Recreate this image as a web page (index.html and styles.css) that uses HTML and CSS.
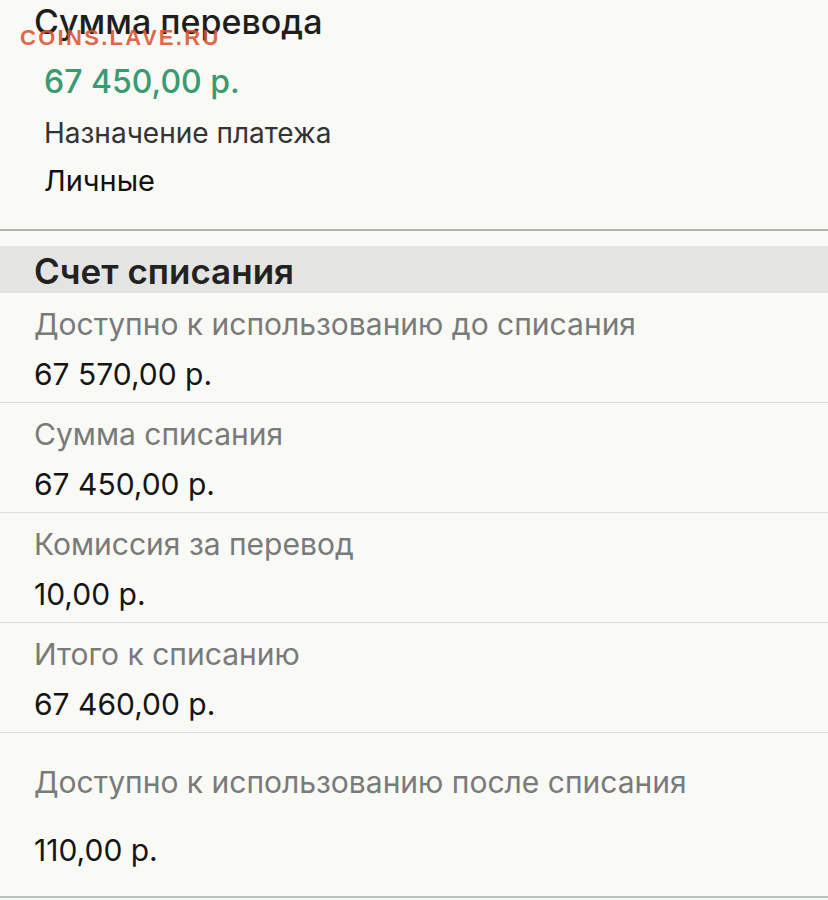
FILE: index.html
```html
<!DOCTYPE html>
<html lang="ru">
<head>
  <meta charset="UTF-8" />
  <title>Перевод — подтверждение</title>
  <link rel="stylesheet" href="styles.css">
</head>
<body>
  <div class="watermark">COINS.LAVE.RU</div>

  <div class="transfer">
    <div class="transfer-title">Сумма перевода</div>
    <div class="transfer-body">
      <div class="amount">67 450,00 р.</div>
      <div class="purpose-label">Назначение платежа</div>
      <div class="purpose-value">Личные</div>
    </div>
  </div>

  <div class="section-head">Счет списания</div>

  <div class="row">
    <div class="row-label">Доступно к использованию до списания</div>
    <div class="row-value">67 570,00 р.</div>
  </div>
  <div class="row">
    <div class="row-label">Сумма списания</div>
    <div class="row-value">67 450,00 р.</div>
  </div>
  <div class="row">
    <div class="row-label">Комиссия за перевод</div>
    <div class="row-value">10,00 р.</div>
  </div>
  <div class="row">
    <div class="row-label">Итого к списанию</div>
    <div class="row-value">67 460,00 р.</div>
  </div>
  <div class="row row-last">
    <div class="row-label">Доступно к использованию после списания</div>
    <div class="row-value">110,00 р.</div>
  </div>
</body>
</html>
```

FILE: styles.css
```css
body {
  margin: 0;
  font-family: Inter, "Liberation Sans", sans-serif;
  background: #f9f9f5;
  color: #1c1c1c;
  position: relative;
  height: 900px;
  overflow: hidden;
}

.watermark {
  position: absolute;
  left: 20px;
  top: 25px;
  font: bold 22px "Liberation Sans", Arial, sans-serif;
  color: rgba(220, 84, 50, 0.88);
  letter-spacing: 2.3px;
}

.transfer { height: 229px; border-bottom: 2px solid #b5b5b0; }
.transfer-title { font-size: 34px; font-weight: 500; padding: 2px 0 0 34px; line-height: 40px; color: #1e1e1e; }
.transfer-body { padding-left: 44px; }
.amount { color: #3a9a72; font-size: 32px; font-weight: 500; line-height: 40px; margin-top: 20px; }
.purpose-label { font-size: 28px; line-height: 30px; margin-top: 16px; color: #333; }
.purpose-value { font-size: 29px; line-height: 30px; margin-top: 18px; color: #111; }

.section-head {
  margin-top: 15px;
  height: 47px;
  line-height: 50px;
  background: #e4e4e3;
  padding-left: 34px;
  font-size: 35px;
  font-weight: 600;
  color: #222;
}

.row {
  border-bottom: 1px solid #ddddd8;
  padding-left: 34px;
  box-sizing: border-box;
  height: 110px;
}
.row-label { color: #7a7a7a; font-size: 30px; line-height: 34px; padding-top: 14px; }
.row-value { color: #151515; font-size: 30px; line-height: 34px; margin-top: 16px; }

.row-last { height: 165px; border-bottom: 2px solid #b8c4bc; }
.row-last .row-label { padding-top: 32px; }
.row-last .row-value { margin-top: 34px; }
```
